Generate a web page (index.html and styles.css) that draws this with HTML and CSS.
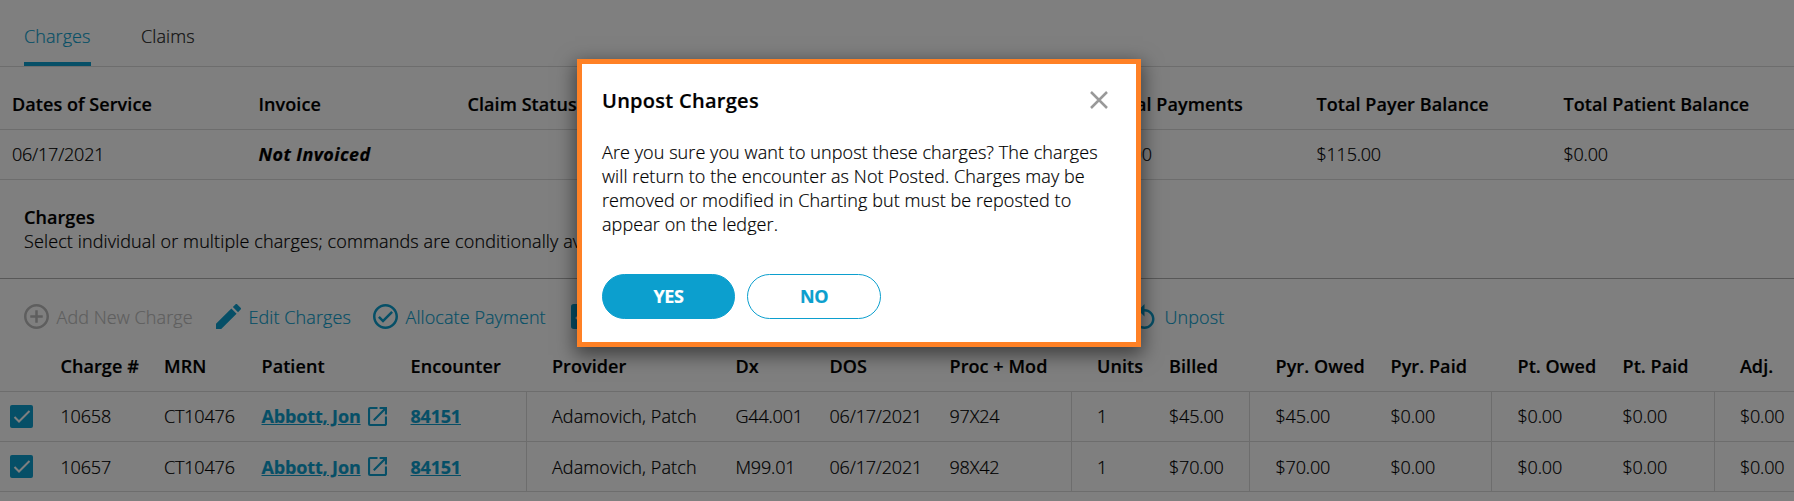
FILE: index.html
```html
<!DOCTYPE html>
<html lang="en">
<head>
<meta charset="utf-8">
<title>Charges</title>
<link rel="stylesheet" href="styles.css">
</head>
<body>
<main class="page">
  <nav class="tabs">
    <a class="tab tab-active">Charges</a>
    <a class="tab">Claims</a>
  </nav>

  <section class="summary">
    <div class="summary-row summary-head">
      <span>Dates of Service</span><span>Invoice</span><span>Claim Status</span><span>Total Payments</span><span>Total Payer Balance</span><span>Total Patient Balance</span>
    </div>
    <div class="summary-row summary-data">
      <span>06/17/2021</span><span class="not-invoiced">Not Invoiced</span><span></span><span>$0.00</span><span>$115.00</span><span>$0.00</span>
    </div>
  </section>

  <header class="intro">
    <h2 class="intro-title">Charges</h2>
    <p class="intro-text">Select individual or multiple charges; commands are conditionally available.</p>
  </header>

  <div class="toolbar">
    <a class="tool tool-add">
      <svg class="icon" viewBox="2 2 20 20"><path d="M13 7h-2v4H7v2h4v4h2v-4h4v-2h-4V7zm-1-5C6.480 2 2 6.480 2 12s4.480 10 10 10 10-4.480 10-10S17.520 2 12 2zm0 18c-4.410 0-8-3.590-8-8s3.590-8 8-8 8 3.590 8 8-3.590 8-8 8z"/></svg>
      <span>Add New Charge</span>
    </a>
    <a class="tool tool-edit">
      <svg class="icon" viewBox="3 3 18 18"><path d="M3 17.250V21h3.750L17.810 9.940l-3.750-3.750L3 17.250zM20.710 7.040c.390-.390.390-1.020 0-1.410l-2.340-2.340c-.390-.390-1.020-.390-1.410 0l-1.830 1.830 3.750 3.750 1.830-1.830z"/></svg>
      <span>Edit Charges</span>
    </a>
    <a class="tool tool-allocate">
      <svg class="icon" viewBox="2 2 20 20"><path d="M12 2C6.480 2 2 6.480 2 12s4.480 10 10 10 10-4.480 10-10S17.520 2 12 2zm0 18c-4.410 0-8-3.590-8-8s3.590-8 8-8 8 3.590 8 8-3.590 8-8 8zm4.590-12.420L10 14.170l-2.590-2.580L6 13l4 4 8-8z"/></svg>
      <span>Allocate Payment</span>
    </a>
    <a class="tool tool-box">
      <svg class="icon" viewBox="3 3 18 18"><path d="M19 3H5a2 2 0 0 0-2 2v14a2 2 0 0 0 2 2h14a2 2 0 0 0 2-2V5a2 2 0 0 0-2-2zm-9 14l-4-4 1.410-1.410L10 14.170l6.590-6.590L18 9l-8 8z"/></svg>
    </a>
    <a class="tool tool-unpost">
      <svg class="icon" viewBox="2 1 20 20"><path d="M12 5V1L7 6l5 5V7c3.310 0 6 2.690 6 6s-2.690 6-6 6-6-2.690-6-6H4c0 4.420 3.580 8 8 8s8-3.580 8-8-3.580-8-8-8z"/></svg>
      <span>Unpost</span>
    </a>
  </div>

  <section class="charges">
    <div class="charge-row charge-head">
      <span></span><span>Charge #</span><span>MRN</span><span>Patient</span><span>Encounter</span><span class="rule">Provider</span><span>Dx</span><span>DOS</span><span>Proc + Mod</span><span class="rule">Units</span><span>Billed</span><span class="rule">Pyr. Owed</span><span>Pyr. Paid</span><span class="rule">Pt. Owed</span><span>Pt. Paid</span><span class="rule">Adj.</span>
    </div>
    <div class="charge-row charge-data">
      <span class="check-cell"><svg class="checkbox" viewBox="0 0 23 23"><rect width="23" height="23" rx="2"/><path d="M4.500 12l4.500 4.500L19.500 6"/></svg></span>
      <span>10658</span><span>CT10476</span>
      <span class="patient"><a class="link">Abbott, Jon</a><svg class="open" viewBox="3 3 18 18"><path d="M19 19H5V5h7V3H5a2 2 0 0 0-2 2v14a2 2 0 0 0 2 2h14c1.100 0 2-.900 2-2v-7h-2v7zM14 3v2h3.590l-9.830 9.830 1.410 1.410L19 6.410V10h2V3h-7z"/></svg></span>
      <span><a class="link link-number">84151</a></span>
      <span class="rule name">Adamovich, Patch</span><span>G44.001</span><span>06/17/2021</span><span>97X24</span>
      <span class="rule">1</span><span>$45.00</span><span class="rule">$45.00</span><span>$0.00</span><span class="rule">$0.00</span><span>$0.00</span><span class="rule">$0.00</span>
    </div>
    <div class="charge-row charge-data charge-last">
      <span class="check-cell"><svg class="checkbox" viewBox="0 0 23 23"><rect width="23" height="23" rx="2"/><path d="M4.500 12l4.500 4.500L19.500 6"/></svg></span>
      <span>10657</span><span>CT10476</span>
      <span class="patient"><a class="link">Abbott, Jon</a><svg class="open" viewBox="3 3 18 18"><path d="M19 19H5V5h7V3H5a2 2 0 0 0-2 2v14a2 2 0 0 0 2 2h14c1.100 0 2-.900 2-2v-7h-2v7zM14 3v2h3.590l-9.830 9.830 1.410 1.410L19 6.410V10h2V3h-7z"/></svg></span>
      <span><a class="link link-number">84151</a></span>
      <span class="rule name">Adamovich, Patch</span><span>M99.01</span><span>06/17/2021</span><span>98X42</span>
      <span class="rule">1</span><span>$70.00</span><span class="rule">$70.00</span><span>$0.00</span><span class="rule">$0.00</span><span>$0.00</span><span class="rule">$0.00</span>
    </div>
  </section>
</main>

<div class="overlay">
  <div class="dialog" role="dialog">
    <div class="dialog-head">
      <h1 class="dialog-title">Unpost Charges</h1>
      <svg class="close" viewBox="0 0 18 18"><path d="M1 1l16 16M17 1L1 17"/></svg>
    </div>
    <p class="dialog-text">Are you sure you want to unpost these charges? The charges will return to the encounter as Not Posted. Charges may be removed or modified in Charting but must be reposted to appear on the ledger.</p>
    <div class="actions">
      <button class="button button-primary">YES</button>
      <button class="button">NO</button>
    </div>
  </div>
</div>
</body>
</html>
```
FILE: styles.css
```css
* { box-sizing: border-box; }

body {
  margin: 0;
  height: 501px;
  overflow: hidden;
  background: #fff;
  color: #000;
  font: 300 18px/24px "Open Sans", sans-serif;
  letter-spacing: .08px;
  -webkit-text-stroke: .2px;
}

h1, h2, p { margin: 0; }

.page { height: 501px; overflow: hidden; }

.tabs {
  display: flex;
  gap: 50px;
  height: 67px;
  padding: 24px 24px 0;
  border-bottom: 1px solid #dadada;
}
.tab { height: 42px; color: #222; }
.tab-active { width: 67px; color: #0c9fce; border-bottom: 4px solid #0c9fce; }

.summary-row {
  display: grid;
  grid-template-columns: 246.500px 209px 640px 209px 247px 1fr;
  padding-left: 12px;
  border-bottom: 1px solid #dadada;
  white-space: nowrap;
}
.summary-head { height: 63px; padding-top: 25px; font-weight: 600; letter-spacing: .07px; }
.summary-data { height: 50px; padding-top: 12px; letter-spacing: -.22px; }
.summary-data .not-invoiced { font-weight: 700; font-style: italic; letter-spacing: .4px; }

.intro {
  height: 99px;
  padding: 25px 24px 0;
  border-bottom: 1px solid #b0b0b0;
}
.intro-title { font-size: 18px; line-height: 24px; font-weight: 600; }
.intro-text { letter-spacing: .12px; }

.toolbar {
  display: flex;
  align-items: flex-start;
  height: 63px;
  padding: 25px 24px 0;
  color: #0c9fce;
}
.tool { display: flex; gap: 7.500px; white-space: nowrap; }
.tool span { padding-top: 1px; }
.tool-add { width: 192px; color: #bdbdbd; }
.tool-edit { width: 157px; }
.tool-allocate { width: 198px; }
.tool-box { width: 561px; }
.icon { flex: none; width: 25px; height: 25px; fill: currentColor; }

.charge-row {
  display: grid;
  grid-template-columns: 50.500px 103.500px 97.500px 149px 115.400px 209.600px 94px 120px 121.500px 98px 80.500px 141px 101px 131px 91.400px 1fr;
  height: 50px;
  padding-left: 10px;
  border-bottom: 1px solid #dadada;
  white-space: nowrap;
}
.charge-row > span { padding-top: 12px; }
.charge-data { letter-spacing: -.18px; }
.charge-last > span { padding-top: 13px; }
.charge-head { font-weight: 600; }
.charge-row > .check-cell { padding-top: 13px; }
.checkbox { display: block; width: 23px; height: 23px; fill: #0c9fce; }
.checkbox path { fill: none; stroke: #fff; stroke-width: 2; }
.patient { display: flex; gap: 7px; }
.link { color: #0c9fce; font-weight: 700; text-decoration: underline; letter-spacing: -.15px; }
.link-number { letter-spacing: -.2px; }
.open { width: 19px; height: 19px; margin-top: 3px; fill: #0c9fce; }
.charge-last .open { margin-top: 2px; }
.rule { border-left: 1px solid #dadada; padding-left: 25px; }
.charge-head .rule { border-left-color: transparent; }
.name { letter-spacing: .12px; }

.overlay {
  position: absolute;
  inset: 0;
  padding: 59px 0 0 577px;
  background: rgba(0, 0, 0, .5);
}
.dialog {
  width: 564px;
  height: 288px;
  padding: 22px 20px;
  border: 5px solid #ff8125;
  background: #fff;
  box-shadow: 0 6px 18px 2px rgba(0, 0, 0, .5);
}
.dialog-head { display: flex; justify-content: space-between; height: 54px; padding-right: 8px; }
.dialog-title { padding-top: 1px; font-size: 20px; line-height: 28px; font-weight: 600; letter-spacing: .28px; }
.close { width: 18px; height: 18px; margin-top: 5px; fill: none; stroke: #999; stroke-width: 2.500; }
.dialog-text { height: 134px; }
.actions { display: flex; gap: 12px; }
.button {
  width: 134px;
  height: 45px;
  padding: 0 0 1px;
  border: 1px solid #0c9fce;
  border-radius: 23px;
  background: #fff;
  color: #0c9fce;
  font: 700 18px/24px "Open Sans", sans-serif;
  letter-spacing: -.4px;
}
.button-primary { width: 133px; background: #0c9fce; color: #fff; }
```
